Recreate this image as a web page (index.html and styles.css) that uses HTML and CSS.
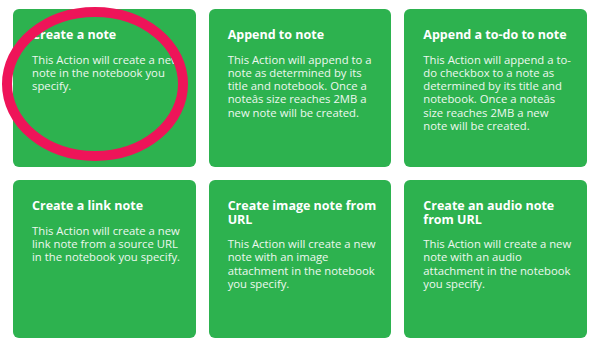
FILE: index.html
```html
<!DOCTYPE html>
<html>
<head>
<meta charset="utf-8">
<link rel="stylesheet" href="styles.css">
</head>
<body>
<div class="page">
  <div class="grid">
    <div class="card">
      <h3 class="title">Create a note</h3>
      <p class="desc">This Action will create a new note in the notebook you specify.</p>
    </div>
    <div class="card">
      <h3 class="title">Append to note</h3>
      <p class="desc">This Action will append to a note as determined by its title and notebook. Once a noteâs size reaches 2MB a new note will be created.</p>
    </div>
    <div class="card">
      <h3 class="title">Append a to-do to note</h3>
      <p class="desc">This Action will append a to-do checkbox to a note as determined by its title and notebook. Once a noteâs size reaches 2MB a new note will be created.</p>
    </div>
    <div class="card">
      <h3 class="title">Create a link note</h3>
      <p class="desc">This Action will create a new link note from a source URL in the notebook you specify.</p>
    </div>
    <div class="card">
      <h3 class="title">Create image note from URL</h3>
      <p class="desc">This Action will create a new note with an image attachment in the notebook you specify.</p>
    </div>
    <div class="card">
      <h3 class="title">Create an audio note from URL</h3>
      <p class="desc">This Action will create a new note with an audio attachment in the notebook you specify.</p>
    </div>
  </div>
  <svg class="circle" width="200" height="175" viewBox="0 0 200 175">
    <ellipse cx="95" cy="84" rx="88" ry="72" fill="none" stroke="#ee1459" stroke-width="10"/>
  </svg>
</div>
</body>
</html>
```

FILE: styles.css
```css
html, body {
  margin: 0;
  padding: 0;
  background: #ffffff;
}
.page {
  position: relative;
  width: 598px;
  height: 356px;
  overflow: hidden;
  font-family: "Open Sans", Lato, sans-serif;
}
.grid {
  display: grid;
  grid-template-columns: repeat(3, 1fr);
  grid-auto-rows: 158px;
  gap: 13px;
  padding: 9px 11px 0 13px;
}
.card {
  background: #2db24f;
  border-radius: 6px;
  padding: 19px 14px 0 19px;
  color: #ffffff;
  box-sizing: border-box;
}
.title {
  margin: 0 0 11px 0;
  font-size: 12.5px;
  line-height: 13.5px;
  font-weight: 700;
}
.desc {
  margin: 0;
  font-size: 11.3px;
  line-height: 13.3px;
  color: #eef8f0;
}
.circle {
  position: absolute;
  left: 0;
  top: 0;
}
```
